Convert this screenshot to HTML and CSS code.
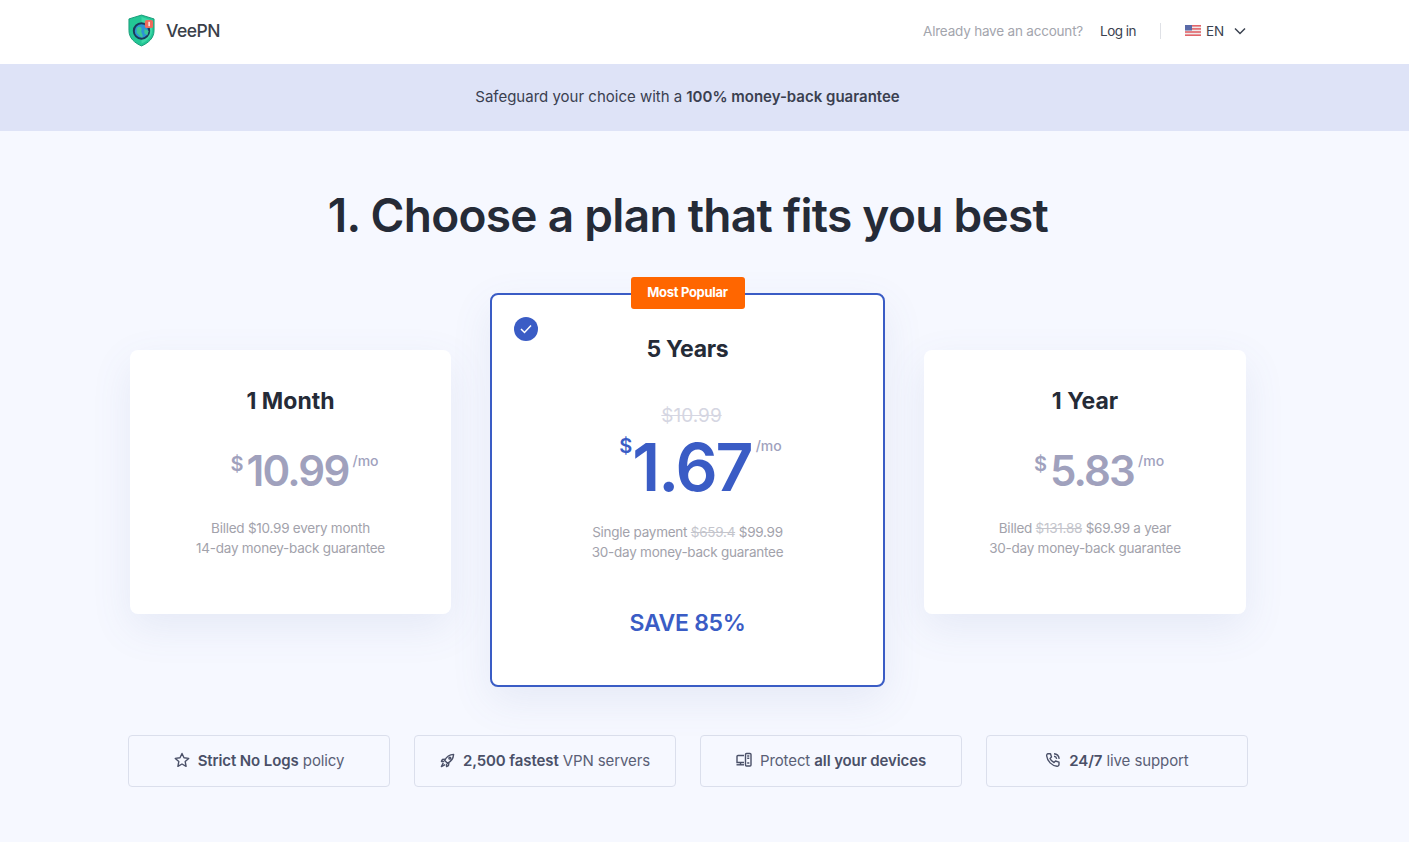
FILE: index.html
```html
<!DOCTYPE html>
<html lang="en">
<head>
    <meta charset="UTF-8">
    <meta name="viewport" content="width=device-width, initial-scale=1.0">
    <title>VeePN - Choose a plan</title>
    <link rel="stylesheet" href="styles.css">
</head>
<body>
    <header class="topbar">
        <div class="wrap topbar-row">
            <a class="logo" href="#">
                <svg class="logo-mark" width="27" height="33" viewBox="0 0 28 34">
                    <path d="M14 1 L27 5 V17 C27 25 21 30 14 33 C7 30 1 25 1 17 V5 Z" fill="#23c795" stroke="#179a78" stroke-width="1"/>
                    <path d="M14 3 L25 6.500 V17 C25 23.500 20 27.500 14 30.500 Z" fill="#3fd8a8"/>
                    <circle cx="14" cy="17.500" r="8" fill="#2d93d6" stroke="#1a3a58" stroke-width="2"/>
                    <path d="M9 14.500 C12 11.500 15 13.500 14 16.500 C13 19.500 16 20.500 15 24.500 C12 23.500 11 20.500 9 19.500 Z" fill="#3ac796"/>
                    <path d="M17 15.500 L21.500 17.500 L20 22 L17 20 Z" fill="#3ac796"/>
                    <rect x="17.500" y="6" width="8.500" height="8.500" rx="2" fill="#ef6a5c"/>
                    <rect x="21.200" y="8" width="1.400" height="4.500" fill="#fff"/>
                </svg>
                <span>VeePN</span>
            </a>
            <div class="account">
                <span class="account-q">Already have an account?</span>
                <a class="login" href="#">Log in</a>
                <span class="divider"></span>
                <span class="lang">
                    <svg width="16" height="11" viewBox="0 0 16 11">
                        <rect width="16" height="11" rx="1" fill="#f0e9ea"/>
                        <rect y="0" width="16" height="1.600" fill="#e2656a"/>
                        <rect y="3.100" width="16" height="1.600" fill="#e2656a"/>
                        <rect y="6.200" width="16" height="1.600" fill="#e2656a"/>
                        <rect y="9.400" width="16" height="1.600" fill="#e2656a"/>
                        <rect width="7" height="5.500" fill="#5a6aa8"/>
                    </svg>
                    EN
                    <svg class="chev" width="12" height="8" viewBox="0 0 12 8"><path d="M1 1.500 L6 6.500 L11 1.500" fill="none" stroke="#3b4250" stroke-width="1.500"/></svg>
                </span>
            </div>
        </div>
    </header>

    <div class="banner">Safeguard your choice with a <strong>100% money-back guarantee</strong></div>

    <main class="wrap">
        <h1>1. Choose a plan that fits you best</h1>

        <div class="plans">
            <div class="plan">
                <h2>1 Month</h2>
                <div class="price"><span class="cur">$</span><span class="amount">10.99</span><span class="per">/mo</span></div>
                <p class="note">Billed $10.99 every month<br>14-day money-back guarantee</p>
            </div>

            <div class="plan plan-best">
                <span class="popular">Most Popular</span>
                <span class="check">
                    <svg width="12" height="10" viewBox="0 0 12 10"><path d="M1 5 L4.500 8.500 L11 1.500" fill="none" stroke="#fff" stroke-width="1.500"/></svg>
                </span>
                <h2>5 Years</h2>
                <div class="old-price">$10.99</div>
                <div class="price"><span class="cur">$</span><span class="amount">1.67</span><span class="per">/mo</span></div>
                <p class="note">Single payment <s>$659.4</s> $99.99<br>30-day money-back guarantee</p>
                <div class="save">SAVE 85%</div>
            </div>

            <div class="plan">
                <h2>1 Year</h2>
                <div class="price"><span class="cur">$</span><span class="amount">5.83</span><span class="per">/mo</span></div>
                <p class="note">Billed <s>$131.88</s> $69.99 a year<br>30-day money-back guarantee</p>
            </div>
        </div>

        <div class="features">
            <div class="feature">
                <svg width="16" height="16" viewBox="0 0 16 16"><path d="M8 1.500 L10 5.800 L14.700 6.400 L11.200 9.600 L12.100 14.300 L8 12 L3.900 14.300 L4.800 9.600 L1.300 6.400 L6 5.800 Z" fill="none" stroke="#4a5068" stroke-width="1.400" stroke-linejoin="round"/></svg>
                <span><b>Strict No Logs</b> policy</span>
            </div>
            <div class="feature">
                <svg width="15" height="15" viewBox="0 0 16 16" fill="none" stroke="#4a5068" stroke-width="1.500" stroke-linejoin="round"><path d="M14.500 1.500 C10 1.800 7 4 5 8 L8 11 C12 9 14.200 6 14.500 1.500 Z"/><path d="M5.800 6.500 L2.500 7 L1.500 9 L4.500 9"/><path d="M9.500 10.200 L9 13.500 L7 14.500 L7 11.500"/><path d="M3.500 10.500 L1.500 14.500 L5.500 12.500"/><circle cx="10.500" cy="5.500" r="1"/></svg>
                <span><b>2,500 fastest</b> VPN servers</span>
            </div>
            <div class="feature">
                <svg width="16" height="16" viewBox="0 0 16 16" fill="none" stroke="#4a5068" stroke-width="1.400"><path d="M8 3.500 H2 C1.500 3.500 1 4 1 4.500 V10.500 H8"/><path d="M0.500 12.800 H8"/><path d="M4.500 10.500 V12.800"/><rect x="9.500" y="1.500" width="5.500" height="12.500" rx="1"/><path d="M11.200 4 H13.300 M11.200 6.200 H13.300 M11.200 11 H13.300"/></svg>
                <span>Protect <b>all your devices</b></span>
            </div>
            <div class="feature">
                <svg width="16" height="16" viewBox="0 0 16 16" fill="none" stroke="#4a5068" stroke-width="1.400" stroke-linejoin="round"><path d="M3 1.800 L5.500 1.800 L6.500 5 L5 6.500 C5.800 8.300 7.200 9.700 9 10.500 L10.500 9 L14 10.200 L14 12.500 C14 13.500 13 14.500 12 14.300 C6.800 13.700 2.300 9.200 1.700 4 C1.500 2.900 2 1.800 3 1.800 Z"/><path d="M9 1.800 C11.800 2 13.800 4 14.200 6.800"/><path d="M9 4.300 C10.400 4.500 11.500 5.500 11.700 6.800"/></svg>
                <span><b>24/7</b> live support</span>
            </div>
        </div>
    </main>
</body>
</html>
```

FILE: styles.css
```css
:root {
    --dark: #252b37;
    --blue: #3a5cc5;
    --muted: #a2a2ab;
    --price: #a0a1bd;
}

* {
    box-sizing: border-box;
}

body {
    margin: 0;
    height: 842px;
    overflow: hidden;
    background: #f6f8ff;
    color: var(--dark);
    font-family: "Inter", "Open Sans", sans-serif;
}

a {
    color: inherit;
    text-decoration: none;
}

.wrap {
    width: 1120px;
    margin-left: 128px;
}

.topbar {
    height: 64px;
    background: #fff;
}

.topbar-row {
    height: 61px;
    display: flex;
    align-items: center;
    justify-content: space-between;
}

.logo {
    display: flex;
    align-items: center;
    gap: 11px;
    font-size: 17.5px;
    font-weight: 500;
    letter-spacing: -0.5px;
    color: #3a3f4a;
}

.account {
    display: flex;
    align-items: center;
    font-size: 13.5px;
    letter-spacing: -0.2px;
}

.account-q {
    color: #a3a5ad;
}

.login {
    margin-left: 17px;
    letter-spacing: -0.5px;
    color: #3b4250;
}

.divider {
    width: 1px;
    height: 16px;
    margin: 0 24px;
    background: #dfe1e6;
}

.lang {
    display: flex;
    align-items: center;
    gap: 5px;
    margin-right: 2px;
    color: #3b4250;
}

.chev {
    margin-left: 5px;
}

.banner {
    height: 67px;
    display: flex;
    align-items: center;
    justify-content: center;
    gap: 4px;
    padding: 0 34px 2px 0;
    background: #dee3f7;
    color: #3a4050;
    font-size: 15px;
}

.banner strong {
    font-weight: 600;
}

h1 {
    margin: 53px 0 0;
    text-align: center;
    font-size: 46px;
    line-height: 62px;
    font-weight: 600;
    letter-spacing: -0.7px;
}

.plans {
    display: flex;
    align-items: center;
    gap: 39px;
    margin-top: 47px;
    padding: 0 2px;
}

.plan {
    position: relative;
    width: 322px;
    height: 264px;
    margin-bottom: 16px;
    padding-top: 37px;
    text-align: center;
    background: #fff;
    border-radius: 8px;
    box-shadow: 0 14px 40px rgba(90, 105, 170, 0.1);
}

.plan:first-child {
    width: 321px;
}

.plan h2 {
    margin: 0;
    font-size: 23px;
    line-height: 28px;
    font-weight: 700;
    letter-spacing: 0;
}

.price {
    display: flex;
    justify-content: center;
    align-items: flex-start;
    margin-top: 29px;
    padding-left: 28px;
    color: var(--price);
}

.cur {
    margin: 8px 3px 0 0;
    font-size: 20px;
    font-weight: 600;
}

.amount {
    font-size: 42px;
    line-height: 54px;
    font-weight: 600;
    letter-spacing: -1.800px;
}

.per {
    margin: 8px 0 0 4px;
    font-size: 14px;
    font-weight: 500;
}

.note {
    margin: 20px 0 0;
    font-size: 13.5px;
    line-height: 20px;
    letter-spacing: -0.25px;
    color: var(--muted);
}

.note s {
    color: #c4c5cc;
}

.plan-best {
    width: 395px;
    height: 394px;
    margin-bottom: 0;
    padding-top: 40px;
    border: 2px solid var(--blue);
}

.plan-best h2 {
    letter-spacing: -0.3px;
}

.popular {
    position: absolute;
    top: -18px;
    left: 50%;
    transform: translateX(-50%);
    width: 114px;
    height: 32px;
    line-height: 31px;
    background: #ff6600;
    border-radius: 3px;
    color: #fff;
    font-size: 13px;
    font-weight: 700;
    letter-spacing: -0.3px;
}

.check {
    position: absolute;
    top: 22px;
    left: 22px;
    width: 24px;
    height: 24px;
    display: flex;
    align-items: center;
    justify-content: center;
    border-radius: 50%;
    background: var(--blue);
}

.old-price {
    margin: 41px 0 0 8px;
    font-size: 19px;
    line-height: 24px;
    color: #d5d6e2;
    text-decoration: line-through;
}

.plan-best .price {
    margin-top: 5px;
    padding-left: 26px;
    color: var(--blue);
}

.plan-best .cur {
    margin: 1px 0 0 0;
    font-size: 20px;
}

.plan-best .amount {
    font-size: 66px;
    line-height: 68px;
    letter-spacing: -2px;
}

.plan-best .per {
    margin: 4px 0 0 4px;
    color: var(--price);
}

.plan-best .note {
    margin-top: 21px;
}

.save {
    margin-top: 47px;
    font-size: 23px;
    line-height: 28px;
    font-weight: 600;
    letter-spacing: -0.3px;
    color: var(--blue);
}

.features {
    display: grid;
    grid-template-columns: repeat(4, 262px);
    gap: 24px;
    margin-top: 48px;
}

.feature {
    height: 52px;
    display: flex;
    align-items: center;
    justify-content: center;
    gap: 8px;
    padding-bottom: 2px;
    border: 1px solid #dbdfec;
    border-radius: 4px;
    color: #5a5f76;
    font-size: 15px;
    letter-spacing: -0.1px;
}

.feature b {
    font-weight: 600;
    color: #4a5068;
}
```
